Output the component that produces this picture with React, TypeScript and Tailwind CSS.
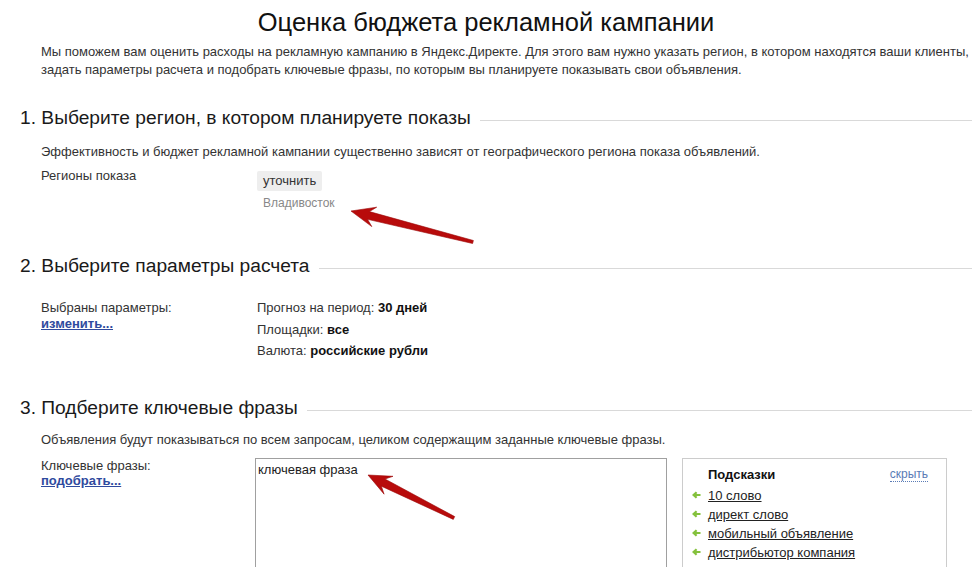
import React from 'react';

type Pt = [number, number];

// red callout arrow: tapered shaft with a notched head
function arrowPoints(tip: Pt, tail: Pt, headLen = 20, headW = 10, neckW = 4, tailW = 1.5) {
  const dx = tail[0] - tip[0];
  const dy = tail[1] - tip[1];
  const len = Math.hypot(dx, dy);
  const ux = dx / len, uy = dy / len;
  const nx = -uy, ny = ux;
  const at = (d: number, w: number): Pt => [tip[0] + ux * d + nx * w, tip[1] + uy * d + ny * w];
  const pts: Pt[] = [
    tip,
    at(headLen + 4, headW),
    at(headLen - 2, neckW),
    at(len, tailW),
    at(len, -tailW),
    at(headLen - 2, -neckW),
    at(headLen + 4, -headW),
  ];
  return pts.map((p) => p.map((v) => v.toFixed(1)).join(',')).join(' ');
}

function SectionHeading({ children }: { children: React.ReactNode }) {
  return (
    <div className="flex items-center pl-[20px]">
      <h2 className="text-[19.2px] leading-[22px] text-[#1a1a1a] whitespace-nowrap">{children}</h2>
      <div className="ml-[9px] mt-[5px] h-px flex-1 bg-[#d9d9d9]" />
    </div>
  );
}

function HintArrow() {
  return (
    <svg width="9" height="8" viewBox="0 0 9 8" className="shrink-0">
      <path d="M8.5 4H2.2M4.6 1.2L1.6 4l3 2.8" fill="none" stroke="#84c13c" strokeWidth="2.2" />
    </svg>
  );
}

const hints = ['10 слово', 'директ слово', 'мобильный объявление', 'дистрибьютор компания', 'реклама фирмы'];

export default function App() {
  return (
    <div
      className="relative w-[972px] h-[567px] overflow-hidden bg-white text-[#333]"
      style={{ fontFamily: '"Liberation Sans", Arial, sans-serif' }}
    >
      <h1 className="pt-[8px] text-center text-[25.5px] leading-[29px] text-[#111]">
        Оценка бюджета рекламной кампании
      </h1>

      <p className="mt-[6px] ml-[41px] w-[930px] text-[13px] leading-[18px]">
        Мы поможем вам оценить расходы на рекламную кампанию в Яндекс.Директе. Для этого вам нужно указать регион, в котором находятся ваши клиенты, задать параметры расчета и подобрать ключевые фразы, по которым вы планируете показывать свои объявления.
      </p>

      <div className="mt-[28px]">
        <SectionHeading>1. Выберите регион, в котором планируете показы</SectionHeading>
      </div>
      <div className="pl-[41px] text-[13px]">
        <p className="mt-[14px] leading-[18px]">
          Эффективность и бюджет рекламной кампании существенно зависят от географического региона показа объявлений.
        </p>
        <div className="mt-[6px] flex">
          <div className="w-[216px] leading-[18px]">Регионы показа</div>
          <div className="pt-[4px]">
            <span className="inline-block rounded-[2px] bg-[#eeeeee] px-[6px] text-[13px] leading-[20px] text-[#333]">
              уточнить
            </span>
            <div className="mt-[4px] pl-[6px] text-[12px] leading-[16px] text-[#888]">Владивосток</div>
          </div>
        </div>
      </div>

      <div className="mt-[44px]">
        <SectionHeading>2. Выберите параметры расчета</SectionHeading>
      </div>
      <div className="mt-[20px] flex pl-[41px] text-[13px]">
        <div className="w-[216px] pt-[3px] leading-[16px]">
          <div>Выбраны параметры:</div>
          <a className="font-bold text-[#2f4a9e] underline">изменить...</a>
        </div>
        <div className="leading-[21.5px]">
          <div>
            Прогноз на период: <b className="text-[#111]">30 дней</b>
          </div>
          <div>
            Площадки: <b className="text-[#111]">все</b>
          </div>
          <div>
            Валюта: <b className="text-[#111]">российские рубли</b>
          </div>
        </div>
      </div>

      <div className="mt-[35px]">
        <SectionHeading>3. Подберите ключевые фразы</SectionHeading>
      </div>
      <div className="pl-[41px] text-[13px]">
        <p className="mt-[12px] leading-[18px]">
          Объявления будут показываться по всем запросам, целиком содержащим заданные ключевые фразы.
        </p>
        <div className="mt-[9px] flex items-start">
          <div className="w-[214px] leading-[15px]">
            <div>Ключевые фразы:</div>
            <a className="font-bold text-[#2f4a9e] underline">подобрать...</a>
          </div>
          <div className="h-[130px] w-[412px] border border-[#a0a0a0] px-[2px] pt-[3px] leading-[16px] text-[#222]">
            ключевая фраза
          </div>
          <div className="ml-[15px] h-[130px] w-[265px] border border-[#cccccc] pt-[7px]">
            <div className="flex items-center justify-between pl-[25px] pr-[18px]">
              <span className="font-bold leading-[18px] text-[#111]">Подсказки</span>
              <a className="border-b border-dotted border-[#5a7bb5] text-[12px] leading-[13px] text-[#5a7bb5]">скрыть</a>
            </div>
            <ul className="mt-[2px] pl-[9px] leading-[19px]">
              {hints.map((h) => (
                <li key={h} className="flex items-center gap-[7px]">
                  <HintArrow />
                  <span className="text-[#222] underline">{h}</span>
                </li>
              ))}
            </ul>
          </div>
        </div>
      </div>

      <svg className="pointer-events-none absolute left-0 top-0" width="972" height="567">
        <polygon points={arrowPoints([351, 211], [473, 242])} fill="#b80b0b" stroke="#9a0606" strokeWidth="0.6" />
        <polygon points={arrowPoints([368, 475], [454, 518], 19, 10, 4, 1.6)} fill="#b80b0b" stroke="#9a0606" strokeWidth="0.6" />
      </svg>
    </div>
  );
}
